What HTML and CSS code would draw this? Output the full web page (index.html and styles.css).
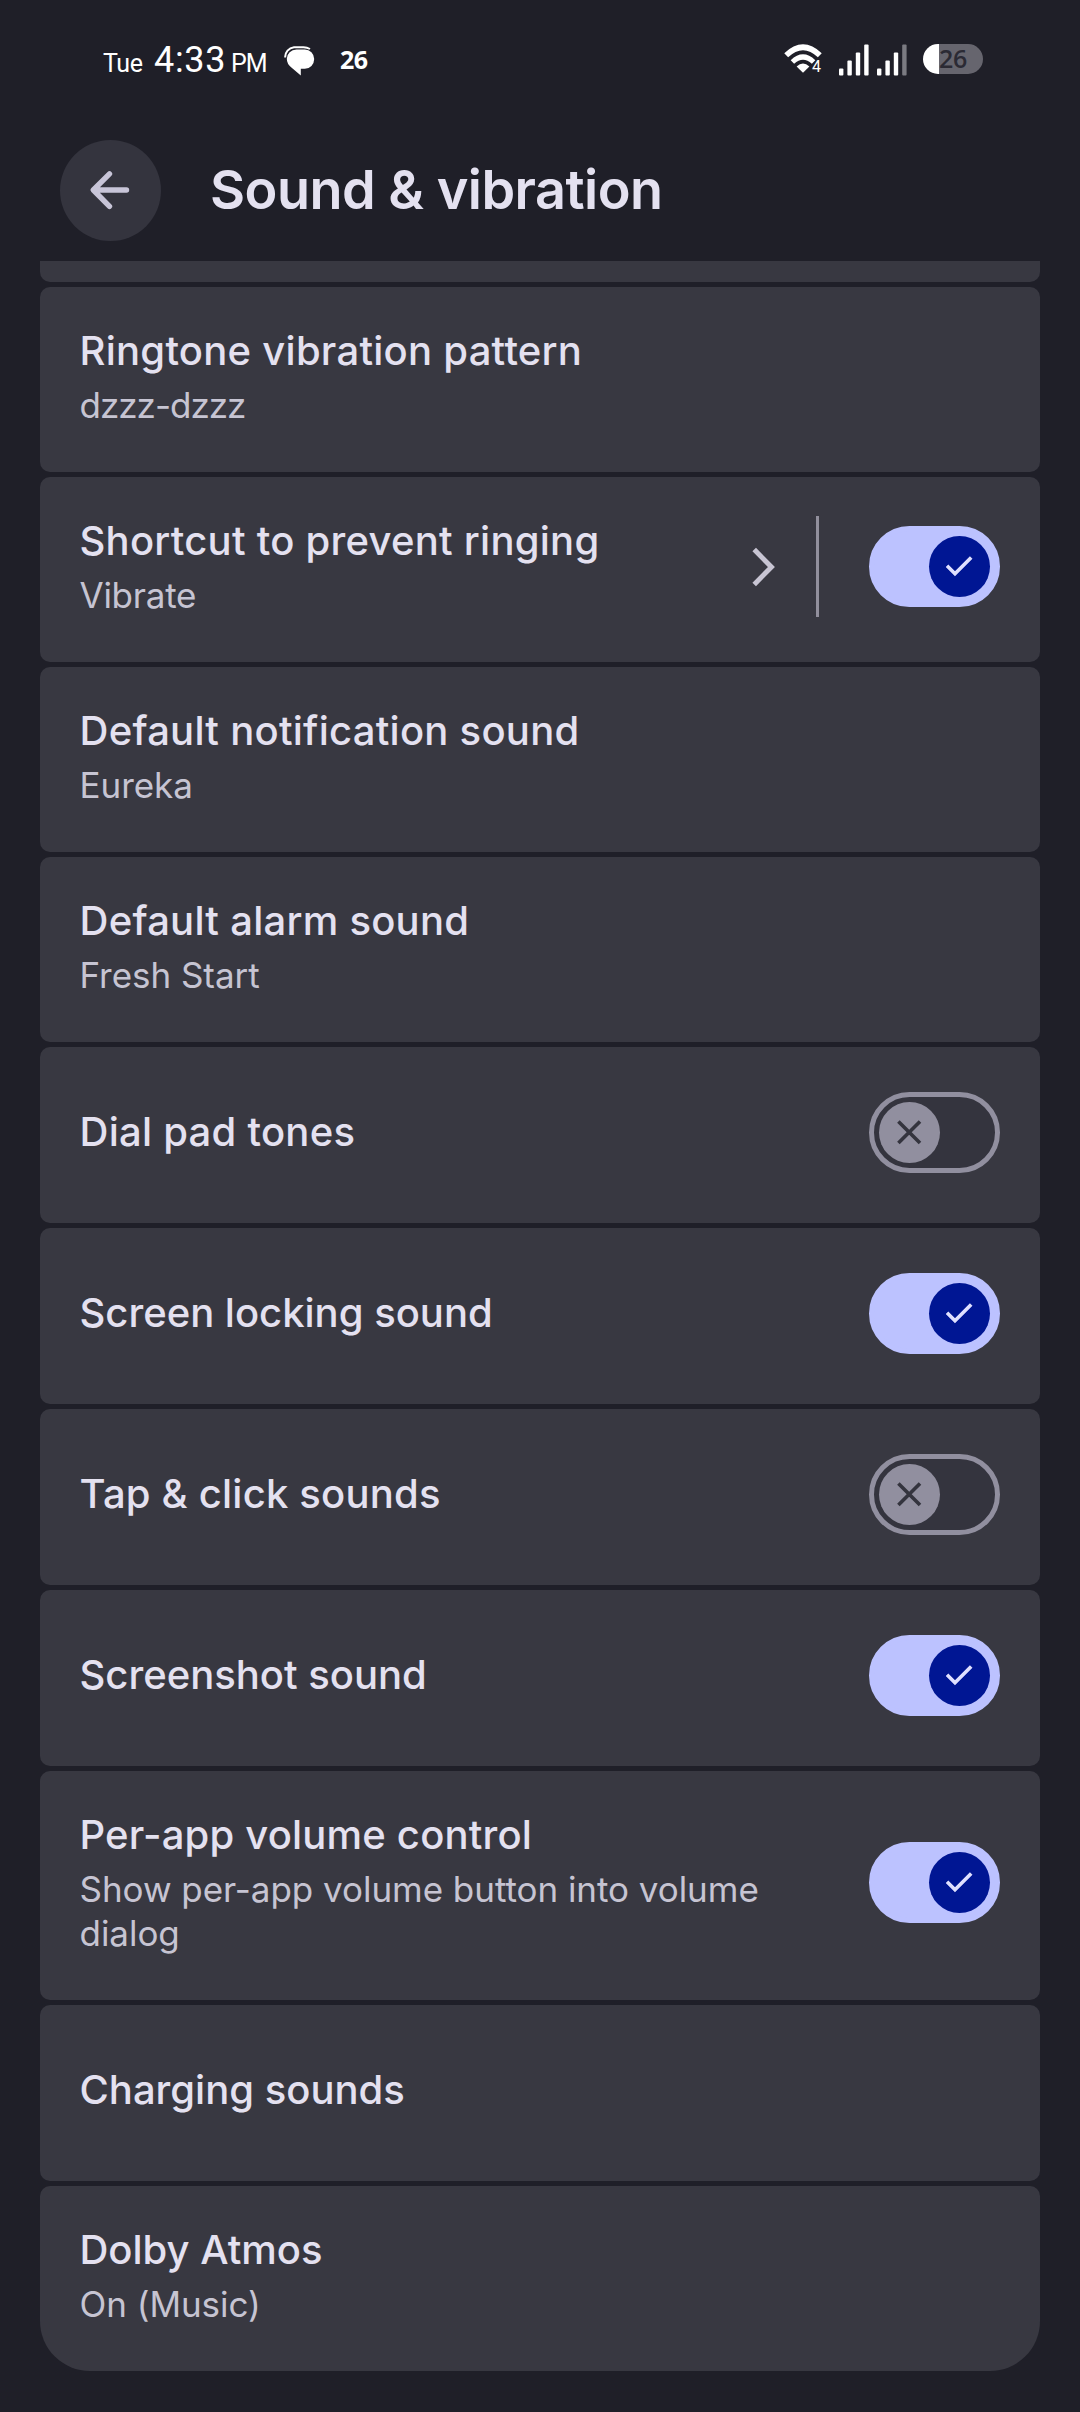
FILE: index.html
```html
<!DOCTYPE html>
<html lang="en">
<head>
<meta charset="utf-8">
<title>Sound &amp; vibration</title>
<link rel="stylesheet" href="styles.css">
</head>
<body>
<svg class="defs" aria-hidden="true">
  <symbol id="check" viewBox="0 0 61 61"><path d="M18 29.8 26 37.8 42.2 21.6" fill="none" stroke="currentColor" stroke-width="3.6"/></symbol>
  <symbol id="cross" viewBox="0 0 61 61"><path d="M19.4 19.4 41 41M41 19.4 19.4 41" fill="none" stroke="currentColor" stroke-width="3.6"/></symbol>
</svg>

<div class="status">
  <div class="clock"><span class="day">Tue</span><span class="time">4:33</span><span class="meridiem">PM</span></div>
  <svg class="chat" width="32" height="30" viewBox="0 0 32 30">
    <path d="M1.2 11.5A9.8 9.8 0 0 1 10 1.2H19.5Q23 1.2 26 3" fill="none" stroke="#fff" stroke-width="2"/>
    <path d="M12.5 3.4H20.8A9.4 9.7 0 0 1 20.8 22.8H16.8V29.5L7.4 21.4Q2.8 18 2.8 12.8A9.8 9.4 0 0 1 12.5 3.4Z" fill="#fff"/>
  </svg>
  <span class="temp">26</span>
  <div class="radios">
    <svg class="wifi" width="39" height="32" viewBox="0 0 39 32">
      <g fill="none" stroke="#fff">
        <path d="M2.2 11.2Q19 -4.8 35.8 11.2" stroke-width="5.6"/>
        <path d="M8.4 18Q19 8 29.6 18" stroke-width="5"/>
      </g>
      <path d="M19 28.8 12.6 22.6Q19 16.6 25.4 22.6Z" fill="#fff"/>
      <text class="wifi-gen" x="28" y="28.4">4</text>
    </svg>
    <svg class="bars" width="30" height="32" viewBox="0 0 30 32" fill="#fff">
      <rect y="24.5" width="4.4" height="7" rx="1"/><rect x="8.4" y="16.5" width="4.4" height="15" rx="1"/><rect x="16.8" y="8.5" width="4.4" height="23" rx="1"/><rect x="25.2" y=".5" width="4.4" height="31" rx="1"/>
    </svg>
    <svg class="bars second" width="30" height="32" viewBox="0 0 30 32" fill="#fff">
      <rect y="24.5" width="4.4" height="7" rx="1"/><rect x="8.4" y="16.5" width="4.4" height="15" rx="1"/><rect x="16.8" y="8.5" width="4.4" height="23" rx="1"/><rect x="25.2" y=".5" width="4.4" height="31" rx="1" fill="#7b7b82"/>
    </svg>
    <div class="battery">26</div>
  </div>
</div>

<header class="bar">
  <div class="back">
    <svg width="101" height="101" viewBox="0 0 101 101" fill="none" stroke="#c8c5d8" stroke-width="5.4" stroke-linecap="round" stroke-linejoin="round"><path d="M66.5 50H33.5M49.5 33.8 33.3 50 49.5 66.4"/></svg>
  </div>
  <h1>Sound &amp; vibration</h1>
</header>

<main class="list">
  <div class="row sliver"></div>
  <div class="row two">
    <div class="text"><div class="title mid">Ringtone vibration pattern</div><div class="sub tight">dzzz-dzzz</div></div>
  </div>
  <div class="row two">
    <div class="text"><div class="title mid">Shortcut to prevent ringing</div><div class="sub snug">Vibrate</div></div>
    <svg class="chevron" width="24" height="40" viewBox="0 0 24 40" fill="none" stroke="#c8c5d3" stroke-width="5"><path d="M3.2 2.6 20.4 20 3.2 37.4"/></svg>
    <div class="divider"></div>
    <div class="switch on"><svg class="thumb"><use href="#check"/></svg></div>
  </div>
  <div class="row two">
    <div class="text"><div class="title mid">Default notification sound</div><div class="sub">Eureka</div></div>
  </div>
  <div class="row two">
    <div class="text"><div class="title mid">Default alarm sound</div><div class="sub">Fresh Start</div></div>
  </div>
  <div class="row">
    <div class="text"><div class="title mid">Dial pad tones</div></div>
    <div class="switch"><svg class="thumb"><use href="#cross"/></svg></div>
  </div>
  <div class="row">
    <div class="text"><div class="title">Screen locking sound</div></div>
    <div class="switch on"><svg class="thumb"><use href="#check"/></svg></div>
  </div>
  <div class="row">
    <div class="text"><div class="title slight">Tap &amp; click sounds</div></div>
    <div class="switch"><svg class="thumb"><use href="#cross"/></svg></div>
  </div>
  <div class="row">
    <div class="text"><div class="title">Screenshot sound</div></div>
    <div class="switch on"><svg class="thumb"><use href="#check"/></svg></div>
  </div>
  <div class="row three">
    <div class="text"><div class="title slight">Per-app volume control</div><div class="sub">Show per-app volume button into volume dialog</div></div>
    <div class="switch on"><svg class="thumb"><use href="#check"/></svg></div>
  </div>
  <div class="row">
    <div class="text"><div class="title">Charging sounds</div></div>
  </div>
  <div class="row two last">
    <div class="text"><div class="title">Dolby Atmos</div><div class="sub">On (Music)</div></div>
  </div>
</main>
</body>
</html>
```
FILE: styles.css
```css
* { box-sizing: border-box; }

body {
  margin: 0;
  width: 1080px;
  height: 2412px;
  overflow: hidden;
  background: #1f1f28;
  color: #e4e1f0;
  font-family: Inter, Roboto, sans-serif;
}

svg { display: block; flex: none; }
.defs { display: none; }

/* status bar */
.status {
  display: flex;
  height: 140px;
  padding: 44px 97px 0 103px;
  color: #fff;
}
.clock {
  display: flex;
  align-items: baseline;
  width: 181px;
  height: 32px;
  line-height: 32px;
  font-family: Roboto, sans-serif;
  font-size: 25px;
}
.day { width: 51px; letter-spacing: -0.4px; }
.time { width: 77px; font-size: 36px; letter-spacing: 0.7px; }
.meridiem { letter-spacing: -1px; }
.chat { margin-top: 2px; }
.temp {
  margin-left: 24px;
  font: 700 25px/31px "Open Sans", sans-serif;
  letter-spacing: -0.6px;
}
.radios { display: flex; margin-left: auto; }
.wifi { overflow: visible; }
.wifi-gen { font: 400 16px/1 Roboto, sans-serif; fill: #fff; stroke: #1f1f28; stroke-width: 2px; paint-order: stroke; }
.bars { margin-left: 16px; }
.bars.second { margin-left: 8px; }
.battery {
  width: 60px;
  height: 30px;
  margin-left: 16px;
  padding-left: 16px;
  border-radius: 15px;
  background: linear-gradient(90deg, #fff 16px, #66656e 16px);
  color: #2b2a34;
  font: 600 25px/29px "Open Sans", sans-serif;
  letter-spacing: -0.3px;
}

/* app bar */
.bar {
  display: flex;
  align-items: center;
  height: 101px;
  padding-left: 60px;
}
.back { width: 101px; height: 101px; border-radius: 50%; background: #34343e; }
h1 {
  margin: 0 0 2px 49px;
  font-size: 54px;
  font-weight: 600;
  letter-spacing: -0.52px;
  line-height: 64px;
}

/* preference list */
.list {
  display: flex;
  flex-direction: column;
  gap: 5px;
  padding: 20px 40px 0;
}
.row {
  display: flex;
  align-items: center;
  height: 176px;
  padding: 0 40px 6px;
  border-radius: 10px;
  background: #383841;
}
.row.sliver { height: 21px; border-radius: 0 0 10px 10px; }
.row.two { height: 185px; }
.row.three { height: 229px; }
.row.last { border-radius: 10px 10px 50px 50px; }

.text { flex: 1; min-width: 0; margin-left: -0.5px; padding-right: 60px; }
.two .text, .three .text { padding-bottom: 2px; }
.title { font-size: 40px; font-weight: 500; line-height: 52px; letter-spacing: 0; white-space: nowrap; }
.title.slight { letter-spacing: 0.2px; }
.title.mid { letter-spacing: 0.26px; }
.sub { padding-top: 6px; font-size: 35px; line-height: 44px; letter-spacing: -0.04px; color: #c6c4d2; }
.sub.tight { letter-spacing: -1px; }
.sub.snug { letter-spacing: -0.25px; }

.chevron { margin-right: 41px; }
.divider { width: 3px; height: 101px; margin-right: 50px; background: #918f9c; }

.switch {
  display: flex;
  align-items: center;
  flex: none;
  width: 131px;
  height: 81px;
  padding-left: 5px;
  border: 5px solid #918f9f;
  border-radius: 41px;
  background: #34343e;
}
.thumb { width: 61px; height: 61px; border-radius: 50%; background: #918f9f; color: #34343e; }
.switch.on { padding-left: 55px; border-color: #bcc2ff; background: #bcc2ff; }
.switch.on .thumb { background: #001693; color: #dfe0ff; }
```
